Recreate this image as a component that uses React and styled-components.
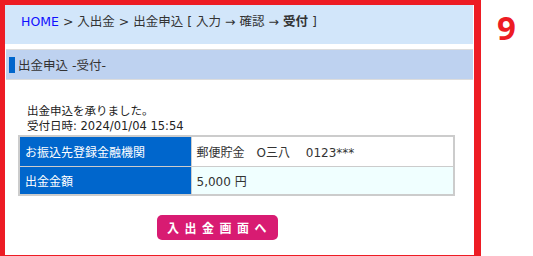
import styled, { createGlobalStyle } from 'styled-components';

const GlobalStyle = createGlobalStyle`
  * {
    margin: 0;
    padding: 0;
    box-sizing: border-box;
  }
  html, body {
    background: #ffffff;
    font-family: "DejaVu Sans", "Noto Sans CJK JP", sans-serif;
    color: #333333;
  }
`;

const Stage = styled.div`
  display: flex;
  align-items: flex-start;
  width: 533px;
  height: 256px;
  overflow: hidden;
`;

const Frame = styled.div`
  width: 481px;
  height: 262px;
  border-style: solid;
  border-color: #ed1c24;
  border-width: 5px 7px 7px 5px;
  padding-right: 1px;
  display: flex;
  flex-direction: column;
`;

const Number = styled.div`
  color: #ed1c24;
  font-family: "Noto Sans", "Liberation Sans", sans-serif;
  font-weight: 700;
  font-size: 33px;
  line-height: 1;
  margin: 11px 0 0 16px;
`;

const Breadcrumb = styled.div`
  height: 39px;
  background: #d2e6fa;
  padding: 7px 0 0 16px;
  font-size: 12.5px;
  line-height: 20px;
  color: #333333;
  white-space: nowrap;
`;

const HomeLink = styled.a`
  color: #1010ff;
  text-decoration: none;
`;

const Strong = styled.b`
  font-weight: 700;
`;

const Heading = styled.h2`
  margin: 5px 0 0 1px;
  height: 31px;
  background: #bed2f0;
  border-top: 1px solid #dddddd;
  border-bottom: 1px solid #dddddd;
  display: flex;
  align-items: center;
  gap: 3px;
  padding-left: 3px;
  font-size: 12.5px;
  font-weight: 400;
  color: #333333;
`;

const Marker = styled.span`
  width: 6px;
  height: 16px;
  background: #0066cc;
`;

const Message = styled.div`
  padding: 24px 0 0 22px;
  font-size: 11.5px;
  line-height: 15px;
  color: #222222;
`;

const Table = styled.table`
  margin: 1px 0 0 13px;
  width: 437px;
  border-collapse: collapse;
  border: 2px solid #cccccc;
  font-size: 12px;
`;

const Row = styled.tr`
  border-top: 1px solid #cccccc;
  height: ${(p) => p.$h}px;
`;

const Label = styled.th`
  width: 172px;
  background: #0066cc;
  color: #ffffff;
  font-weight: 400;
  text-align: left;
  padding-left: 5px;
  border-right: 1px solid #cccccc;
`;

const Value = styled.td`
  background: ${(p) => p.$bg};
  color: #333333;
  padding-left: 5px;
  white-space: pre;
`;

const Actions = styled.div`
  display: flex;
  justify-content: center;
  padding: 19px 0 0 0;
  margin-left: -44px;
`;

const Button = styled.button`
  width: 121px;
  height: 25px;
  border: none;
  border-radius: 5px;
  background: #d81b72;
  color: #ffffff;
  font-family: "Noto Sans CJK JP", sans-serif;
  font-weight: 700;
  font-size: 12px;
  letter-spacing: 5.5px;
  padding-left: 5px;
`;

export default function App() {
  return (
    <>
      <GlobalStyle />
      <Stage>
        <Frame>
          <Breadcrumb>
            <HomeLink href="#">HOME</HomeLink> &gt; 入出金 &gt; 出金申込 [ 入力 → 確認 → <Strong>受付</Strong> ]
          </Breadcrumb>
          <Heading>
            <Marker />
            出金申込 -受付-
          </Heading>
          <Message>
            出金申込を承りました。
            <br />
            受付日時: 2024/01/04 15:54
          </Message>
          <Table>
            <tbody>
              <Row $h={30}>
                <Label>お振込先登録金融機関</Label>
                <Value $bg="#ffffff">{'郵便貯金　O三八　 0123***'}</Value>
              </Row>
              <Row $h={29}>
                <Label>出金金額</Label>
                <Value $bg="#f0ffff">5,000 円</Value>
              </Row>
            </tbody>
          </Table>
          <Actions>
            <Button>入出金画面へ</Button>
          </Actions>
        </Frame>
        <Number>9</Number>
      </Stage>
    </>
  );
}
